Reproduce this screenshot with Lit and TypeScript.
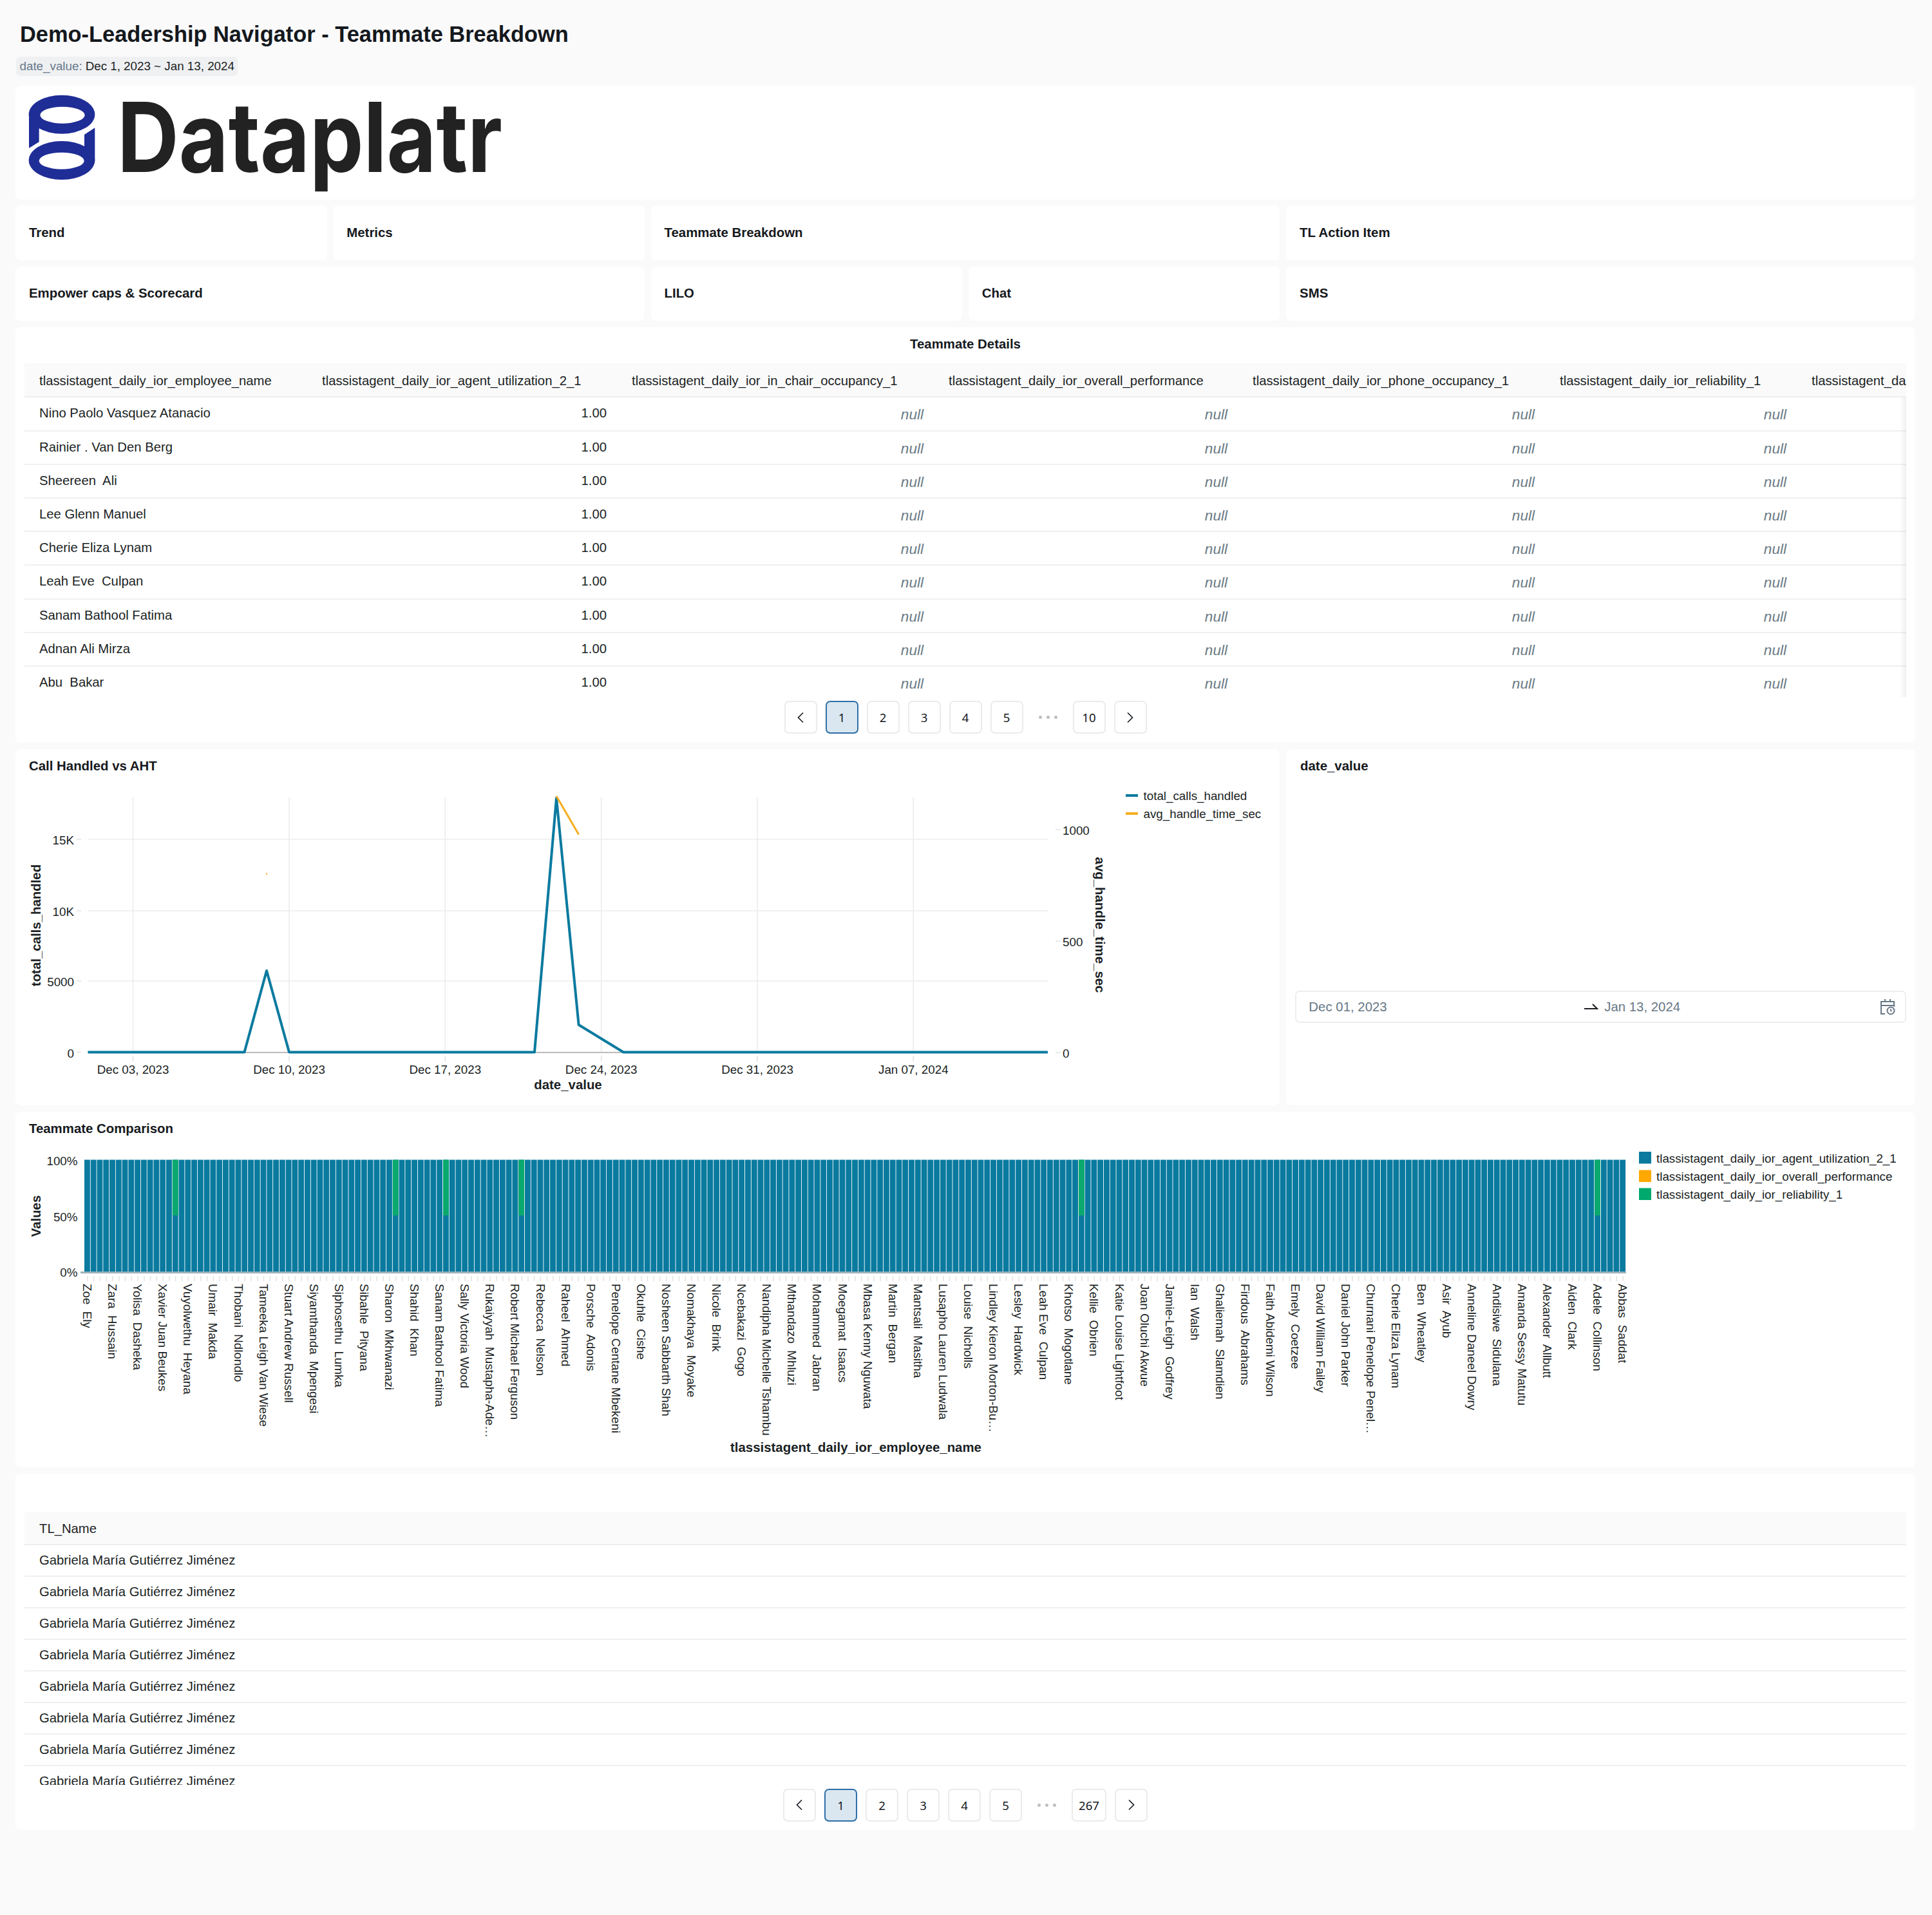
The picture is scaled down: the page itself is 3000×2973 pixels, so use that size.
import { LitElement, html, css, svg } from "lit";
import { customElement } from "lit/decorators.js";

const NAMES = [
  "Zoe  Ely","Zara  Hussain","Yolisa  Dasheka","Xavier Juan Beukes","Vuyolwethu  Heyana","Umair  Makda","Thobani  Ndlondlo","Tameeka Leigh Van Wiese","Stuart Andrew Russell","Siyamthanda  Mpengesi","Siphosethu  Lumka","Sibahle  Pityana","Sharon  Mkhwanazi","Shahid  Khan","Sanam Bathool Fatima","Sally Victoria Wood","Rukaiyyah  Mustapha-Ade…","Robert Michael Ferguson","Rebecca  Nelson","Raheel  Ahmed","Porsche  Adonis","Penelope Centane Mbekeni","Okuhle  Cishe","Nosheen Sabbarth Shah","Nomakhaya  Moyake","Nicole  Brink","Ncebakazi  Gogo","Nandipha Michelle Tshambu","Mthandazo  Mhluzi","Mohammed  Jabran","Moegamat  Isaacs","Mbasa Kenny Nguwata","Martin  Bergan","Mantsali  Masitha","Lusapho Lauren Ludwala","Louise  Nicholls","Lindley Kieron Morton-Bu…","Lesley  Hardwick","Leah Eve  Culpan","Khotso  Mogotlane","Kellie  Obrien","Katie Louise Lightfoot","Joan Oluchi Akwue","Jamie-Leigh  Godfrey","Ian  Walsh","Ghaliemah  Slamdien","Firdous  Abrahams","Faith Abidemi Wilson","Emely  Coetzee","David William Failey","Daniel John Parker","Churnani Penelope Penel…","Cherie Eliza Lynam","Ben  Wheatley","Asir  Ayub","Anneline Daneel Dowry","Andisiwe  Sidulana","Amanda Sessy Matutu","Alexander  Allbutt","Aiden  Clark","Adele  Collinson","Abbas  Saddat",
];
const ROWS = ["Nino Paolo Vasquez Atanacio","Rainier . Van Den Berg","Sheereen  Ali","Lee Glenn Manuel","Cherie Eliza Lynam","Leah Eve  Culpan","Sanam Bathool Fatima","Adnan Ali Mirza","Abu  Bakar"];
const HEADERS = ["employee_name","agent_utilization_2_1","in_chair_occupancy_1","overall_performance","phone_occupancy_1","reliability_1","schedule_adherence_1"].map((s) => "tlassistagent_daily_ior_" + s);
const COLS = [438, 481, 492, 472, 477, 391, 400];
const TEAL = "#0a7a9f";
const GREEN = "#0aa96e";
const GREENS = new Set([14, 49, 57, 69, 158, 240]);

const chevron = (left: boolean) => html`<svg class="chev" viewBox="0 0 12 18"><path d=${left ? "M10 1.5 2.5 9l7.5 7.5" : "M2 1.5 9.5 9 2 16.5"}></path></svg>`;

function pager(last: string) {
  return html`<div class="pager">
    <div class="pg">${chevron(true)}</div>
    <div class="pg on">1</div><div class="pg">2</div><div class="pg">3</div><div class="pg">4</div><div class="pg">5</div>
    <div class="dots"><i></i><i></i><i></i></div>
    <div class="pg wide">${last}</div>
    <div class="pg">${chevron(false)}</div>
  </div>`;
}

function lineChart() {
  const vx = [206.6, 449, 691.3, 933.7, 1176, 1418.3];
  const xl = ["Dec 03, 2023", "Dec 10, 2023", "Dec 17, 2023", "Dec 24, 2023", "Dec 31, 2023", "Jan 07, 2024"];
  const hy: [number, string][] = [[1304, "15K"], [1415, "10K"], [1524, "5000"], [1634.6, "0"]];
  const ry: [number, string][] = [[1289, "1000"], [1462, "500"], [1635, "0"]];
  return svg`<svg class="plot" width="1964" height="514" viewBox="24 1203 1964 514">
    ${vx.map((x) => svg`<line x1=${x} x2=${x} y1="1239" y2="1634" class="grid"></line><line x1=${x} x2=${x} y1="1640" y2="1649" class="tick-mark"></line>`)}
    ${hy.map(([y, t]) => svg`<line x1="136.5" x2="1627" y1=${y} y2=${y} class="grid"></line><line x1="119" x2="126" y1=${y} y2=${y} class="tick-mark"></line><text x="115" y=${y + 1.5} class="lab end">${t}</text>`)}
    <line x1="136.5" x2="1627" y1="1635" y2="1635" class="base"></line>
    ${ry.map(([y, t]) => svg`<line x1="1639" x2="1647" y1=${y} y2=${y} class="tick-mark"></line><text x="1650" y=${y + 1} class="lab">${t}</text>`)}
    ${vx.map((x, i) => svg`<text x=${x} y="1661" class="lab mid">${xl[i]}</text>`)}
    <polyline class="line teal" points="136.5,1634.5 379.5,1634.5 414,1508 449,1634.5 830,1634.5 864,1240 898.6,1592 968,1634.5 1627,1634.5"></polyline>
    <polyline class="line amber" points="864,1237 898.6,1296.5"></polyline>
    <rect x="413" y="1356.5" width="2" height="2.4" fill="#f5ae1f"></rect>
    <text transform="translate(56 1437.5) rotate(-90)" class="axis mid">total_calls_handled</text>
    <text transform="translate(1708 1437) rotate(90)" class="axis mid">avg_handle_time_sec</text>
    <text x="882" y="1685" class="axis mid">date_value</text>
    <line x1="1748" x2="1767" y1="1236" y2="1236" class="leg teal"></line><text x="1775.5" y="1236" class="lab">total_calls_handled</text>
    <line x1="1748" x2="1767" y1="1264" y2="1264" class="leg amber"></line><text x="1775.5" y="1264" class="lab">avg_handle_time_sec</text>
  </svg>`;
}

function stackChart() {
  const x0 = 131, pitch = 2394 / 245, bars = Array.from({ length: 245 }, (_, i) => i);
  return svg`<svg class="plot" width="2950" height="513" viewBox="24 1766 2950 513">
    ${bars.map((i) => svg`<rect x=${x0 + i * pitch} y="1801.5" width=${pitch - 0.9} height="174.5" fill=${TEAL}></rect>
      ${GREENS.has(i) ? svg`<rect x=${x0 + i * pitch} y="1801.5" width=${pitch - 0.9} height="86.5" fill=${GREEN}></rect>` : null}
      <line x1=${x0 + i * pitch + pitch / 2} x2=${x0 + i * pitch + pitch / 2} y1="1982" y2="1990" class="tick-mark"></line>`)}
    <line x1="125" x2="2525" y1="1976.5" y2="1976.5" class="xaxis"></line>
    <text x="120.5" y="1803" class="lab end">100%</text>
    <text x="120.5" y="1890" class="lab end">50%</text>
    <text x="120.5" y="1976" class="lab end">0%</text>
    <text transform="translate(56 1889) rotate(-90)" class="axis mid">Values</text>
    ${NAMES.map((n, i) => svg`<text transform="translate(${x0 + 4.5 + i * 4 * pitch} 1994) rotate(90)" class="lab name">${n}</text>`)}
    <text x="1329" y="2248" class="axis mid">tlassistagent_daily_ior_employee_name</text>
    <rect x="2545" y="1789" width="19" height="18.5" fill=${TEAL}></rect><text x="2572" y="1799" class="lab">tlassistagent_daily_ior_agent_utilization_2_1</text>
    <rect x="2545" y="1817.5" width="19" height="18.5" fill="#ffa800"></rect><text x="2572" y="1827" class="lab">tlassistagent_daily_ior_overall_performance</text>
    <rect x="2545" y="1845.5" width="19" height="18.5" fill="#00a96e"></rect><text x="2572" y="1855" class="lab">tlassistagent_daily_ior_reliability_1</text>
  </svg>`;
}

@customElement("app-root")
export class AppRoot extends LitElement {
  static styles = css`
    :host { display: block; box-sizing: border-box; min-height: 2973px; background: #fafafa; padding: 33px 26px 0 24px; font-family: "Liberation Sans", Arial, sans-serif; color: #1b1f24; }
    h1 { margin: 0 0 0 7px; font-size: 34.4px; line-height: 40px; font-weight: 700; color: #14181d; }
    .chip { display: inline-flex; align-items: center; gap: 5px; height: 30.5px; margin: 14.5px 0 14.5px 1px; padding: 0 5.5px; background: #eff0f2; border-radius: 6px; font-size: 18.8px; white-space: pre; vertical-align: top; }
    .chip span { color: #66788a; }
    .layout { display: grid; grid-template-columns: repeat(6, 1fr); gap: 9.6px; }
    .card { background: #fff; border-radius: 8px; min-width: 0; overflow: hidden; }
    .s2 { grid-column: span 2; } .s4 { grid-column: span 4; } .s6 { grid-column: span 6; }
    .logo { height: 177.4px; }
    .logo svg { display: block; }
    .logo-word { font-family: Inter, "Liberation Sans", sans-serif; font-weight: 700; font-size: 150px; fill: #222; }
    .tab { height: 84.6px; display: flex; align-items: center; padding-left: 21px; font-weight: 700; font-size: 20.4px; color: #16191d; }
    .title { padding: 13px 21px 0; line-height: 26px; height: 39px; box-sizing: border-box; font-weight: 700; font-size: 20.4px; color: #16191d; }
    .date .title { padding-left: 22px; }
    .details { height: 645.6px; }
    .details .title { text-align: center; height: 56.6px; }
    .table { position: relative; margin: 0 14px; overflow: hidden; }
    .details .table { height: 518px; }
    .tl .table { height: 424px; }
    table { border-collapse: separate; border-spacing: 0; table-layout: fixed; font-size: 20.3px; }
    th { height: 53px; box-sizing: border-box; padding: 3px 0 0 24px; background: #fafafa; border-bottom: 2px solid #eee; font-weight: 400; text-align: left; white-space: nowrap; overflow: hidden; }
    td { height: 52.2px; box-sizing: border-box; padding: 11px 15px 0 24px; line-height: 26px; border-bottom: 2px solid #f0f0f0; vertical-align: top; white-space: pre; text-align: right; }
    td:first-child { text-align: left; padding-left: 23px; }
    th:first-child { padding-left: 23px; }
    td.null { padding-top: 14px; color: #6a7a85; font-style: italic; font-size: 22.6px; }
    .shadow { position: absolute; right: 0; top: 53px; bottom: 0; width: 10px; background: linear-gradient(to right, transparent, rgba(0,0,0,.06)); }
    .tl { height: 553.4px; }
    .tl .gap { height: 59px; }
    .tl table { width: 100%; }
    .tl th { height: 52px; }
    .tl td { height: 49px; padding-top: 10px; text-align: left; }
    .pager { display: flex; justify-content: center; gap: 13px; margin-top: 6px; }
    .pg { width: 51px; height: 51px; box-sizing: border-box; display: flex; align-items: center; justify-content: center; border: 2px solid #ebebeb; border-radius: 7px; font-family: "Noto Sans", sans-serif; font-size: 18.67px; color: #14181d; }
    .pg.wide { width: auto; min-width: 51px; padding: 0 9px; }
    .pg.on { background: #dae7f1; border-color: #2e6fa7; }
    .dots { width: 51px; display: flex; align-items: center; justify-content: center; gap: 7px; }
    .dots i { width: 5px; height: 5px; border-radius: 50%; background: #bfbfbf; }
    .chev { width: 12px; height: 18px; fill: none; stroke: #14181d; stroke-width: 1.6; }
    .plot { display: block; }
    .grid { stroke: #ececec; stroke-width: 1.6; }
    .tick-mark { stroke: #e2e2e2; stroke-width: 1.5; }
    .base { stroke: #bdbdbd; stroke-width: 2; }
    .xaxis { stroke: #9db2ba; stroke-width: 3; }
    .lab { font-size: 18.8px; fill: #1b1f24; dominant-baseline: central; white-space: pre; }
    .axis { font-size: 20.4px; font-weight: 700; fill: #1b1f24; dominant-baseline: central; }
    .end { text-anchor: end; } .mid { text-anchor: middle; }
    .line { fill: none; stroke-width: 4; stroke-linejoin: round; }
    .leg { stroke-width: 4; }
    .teal { stroke: #0a7a9f; } .amber { stroke: #f5ae1f; }
    .line.amber { stroke-width: 3; }
    .date .field { display: flex; align-items: center; height: 50px; box-sizing: border-box; margin: 336.4px 14px 0 14.3px; padding: 0 15px 0 19px; border: 2px solid #eee; border-radius: 7px; font-size: 20.4px; color: #677886; }
    .field .part { flex: 1; }
    .field .arrow { width: 22px; height: 12px; margin-right: 9px; fill: none; stroke: #1b1f24; stroke-width: 2; }
    .field .cal { width: 24px; height: 26px; fill: none; stroke: #677886; stroke-width: 2; }
  `;

  render() {
    return html`
      <h1>Demo-Leadership Navigator - Teammate Breakdown</h1>
      <div class="chip"><span>date_value:</span>Dec 1, 2023 ~ Jan 13, 2024</div>
      <div class="layout">
        <div class="card s6 logo">
          <svg width="800" height="177" viewBox="24 133 800 177">
            <g transform="translate(30 135) scale(.3333)" fill="#1f2d96">
              <path fill-rule="evenodd" d="M44 128a154 90 0 1 1 308 0a154 90 0 1 1-308 0ZM97 131a104 39 0 1 0 208 0a104 39 0 1 0-208 0Z"></path>
              <path d="M45 128h47v128l-47 29Z"></path>
              <path fill-rule="evenodd" d="M44 342a154 90 0 1 1 308 0a154 90 0 1 1-308 0ZM92 344a105 39 0 1 0 210 0a105 39 0 1 0-210 0Z"></path>
              <path d="M352 345h-49V222l49-32Z"></path>
            </g>
            <text class="logo-word" x="182" y="267" textLength="598" lengthAdjust="spacingAndGlyphs">Dataplatr</text>
          </svg>
        </div>
        <div class="card tab">Trend</div>
        <div class="card tab">Metrics</div>
        <div class="card tab s2">Teammate Breakdown</div>
        <div class="card tab s2">TL Action Item</div>
        <div class="card tab s2">Empower caps &amp; Scorecard</div>
        <div class="card tab">LILO</div>
        <div class="card tab">Chat</div>
        <div class="card tab s2">SMS</div>

        <div class="card s6 details">
          <div class="title">Teammate Details</div>
          <div class="table">
            <table style="width:${COLS.reduce((a, b) => a + b, 0)}px">
              <colgroup>${COLS.map((w) => html`<col style="width:${w}px" />`)}</colgroup>
              <thead><tr>${HEADERS.map((h) => html`<th>${h}</th>`)}</tr></thead>
              <tbody>
                ${ROWS.map((r) => html`<tr><td>${r}</td><td>1.00</td>${[0, 1, 2, 3, 4].map(() => html`<td class="null">null</td>`)}</tr>`)}
              </tbody>
            </table>
            <div class="shadow"></div>
          </div>
          ${pager("10")}
        </div>

        <div class="card s4">
          <div class="title">Call Handled vs AHT</div>
          ${lineChart()}
        </div>
        <div class="card s2 date">
          <div class="title">date_value</div>
          <div class="field">
            <span class="part">Dec 01, 2023</span>
            <svg class="arrow" viewBox="0 0 22 12"><path d="M0 9h20L13 2"></path></svg>
            <span class="part">Jan 13, 2024</span>
            <svg class="cal" viewBox="0 0 24 26"><path d="M8 24H2V5h20v8M2 11h20M8 1v4M16 1v4"></path><circle cx="17" cy="19" r="5.5"></circle><path d="M17 16.5V19l1.5 1"></path></svg>
          </div>
        </div>

        <div class="card s6" style="height:552.4px">
          <div class="title">Teammate Comparison</div>
          ${stackChart()}
        </div>

        <div class="card s6 tl">
          <div class="gap"></div>
          <div class="table">
            <table>
              <thead><tr><th>TL_Name</th></tr></thead>
              <tbody>${Array.from({ length: 9 }, () => html`<tr><td>Gabriela María Gutiérrez Jiménez</td></tr>`)}</tbody>
            </table>
          </div>
          ${pager("267")}
        </div>
      </div>
    `;
  }
}
